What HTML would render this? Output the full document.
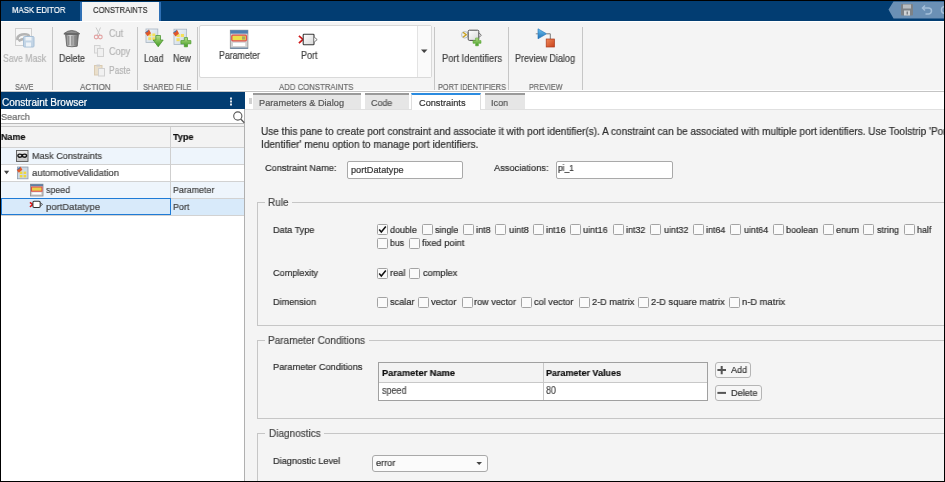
<!DOCTYPE html><html><head><meta charset="utf-8"><style>
*{margin:0;padding:0}
html,body{width:945px;height:482px;overflow:hidden;background:#fff}
body{position:relative;font-family:"Liberation Sans", sans-serif}
body>div,body>svg{position:absolute}
.t{white-space:nowrap;transform-origin:0 50%;will-change:transform;-webkit-text-stroke:0.2px currentColor}
</style></head><body>
<div style="left:0px;top:0px;width:945px;height:482px;background:#000"></div>
<div style="left:1px;top:1px;width:943px;height:480px;background:#fff"></div>
<div style="left:1px;top:1px;width:943px;height:20px;background:#023d72"></div>
<div style="left:80px;top:2px;width:81px;height:19px;background:#f4f4f4;border-left:2px solid #2f70b5;border-right:2px solid #2f70b5;box-sizing:border-box"></div>
<div class="t" style="transform:scaleX(0.8358);left:11.5px;top:6.43px;font-size:9.3px;line-height:9.3px;color:#fff;">MASK EDITOR</div>
<div class="t" style="transform:scaleX(0.8193);left:92.7px;top:6.43px;font-size:9.3px;line-height:9.3px;color:#333;">CONSTRAINTS</div>
<div style="left:1px;top:21px;width:943px;height:70px;background:#f4f4f4;border-top:1px solid #ffffff;box-sizing:border-box"></div>
<div style="left:1px;top:90px;width:943px;height:1px;background:#ffffff"></div>
<div style="left:1px;top:91px;width:943px;height:1px;background:#c4c4c4"></div>
<div style="left:52px;top:27px;width:1px;height:63px;background:#c6c6c6"></div>
<div style="left:137px;top:27px;width:1px;height:63px;background:#c6c6c6"></div>
<div style="left:197px;top:27px;width:1px;height:63px;background:#c6c6c6"></div>
<div style="left:434px;top:27px;width:1px;height:63px;background:#c6c6c6"></div>
<div style="left:508px;top:27px;width:1px;height:63px;background:#c6c6c6"></div>
<div style="left:582px;top:27px;width:1px;height:63px;background:#c6c6c6"></div>
<div class="t" style="transform:scaleX(0.7508);left:15px;top:82.26px;font-size:9.5px;line-height:9.5px;color:#6b6b6b;">SAVE</div>
<div class="t" style="transform:scaleX(0.8498);left:79.5px;top:82.26px;font-size:9.5px;line-height:9.5px;color:#6b6b6b;">ACTION</div>
<div class="t" style="transform:scaleX(0.7769);left:143px;top:82.26px;font-size:9.5px;line-height:9.5px;color:#6b6b6b;">SHARED FILE</div>
<div class="t" style="transform:scaleX(0.8183);left:278.7px;top:82.26px;font-size:9.5px;line-height:9.5px;color:#6b6b6b;">ADD CONSTRAINTS</div>
<div class="t" style="transform:scaleX(0.7744);left:437.5px;top:82.26px;font-size:9.5px;line-height:9.5px;color:#6b6b6b;">PORT IDENTIFIERS</div>
<div class="t" style="transform:scaleX(0.7669);left:528.6px;top:82.26px;font-size:9.5px;line-height:9.5px;color:#6b6b6b;">PREVIEW</div>
<div class="t" style="transform:scaleX(0.8692);left:3px;top:53.83px;font-size:10px;line-height:10px;color:#b4b4b4;">Save Mask</div>
<div class="t" style="transform:scaleX(0.8995);left:58.8px;top:53.83px;font-size:10px;line-height:10px;color:#424242;">Delete</div>
<div class="t" style="transform:scaleX(0.8764);left:143.5px;top:53.83px;font-size:10px;line-height:10px;color:#424242;">Load</div>
<div class="t" style="transform:scaleX(0.8943);left:172.7px;top:53.83px;font-size:10px;line-height:10px;color:#424242;">New</div>
<div class="t" style="transform:scaleX(0.9305);left:441.7px;top:53.83px;font-size:10px;line-height:10px;color:#424242;">Port Identifiers</div>
<div class="t" style="transform:scaleX(0.8995);left:515.4px;top:53.83px;font-size:10px;line-height:10px;color:#424242;">Preview Dialog</div>
<div class="t" style="transform:scaleX(0.9060);left:109.4px;top:28.84px;font-size:10px;line-height:10px;color:#b4b4b4;">Cut</div>
<div class="t" style="transform:scaleX(0.9118);left:109.4px;top:46.83px;font-size:10px;line-height:10px;color:#b4b4b4;">Copy</div>
<div class="t" style="transform:scaleX(0.8406);left:109.4px;top:65.83px;font-size:10px;line-height:10px;color:#b4b4b4;">Paste</div>
<div style="left:199px;top:25px;width:233px;height:53px;background:#fff;border:1px solid #d9d9d9;border-radius:2px;box-sizing:border-box"></div>
<div style="left:417px;top:26px;width:1px;height:51px;background:#e3e3e3"></div>
<div style="left:418px;top:26px;width:13px;height:51px;background:#fafafa"></div>
<div class="t" style="transform:scaleX(0.8782);left:218.9px;top:50.83px;font-size:10px;line-height:10px;color:#424242;">Parameter</div>
<div class="t" style="transform:scaleX(0.8995);left:300.5px;top:50.83px;font-size:10px;line-height:10px;color:#424242;">Port</div>
<div style="left:1px;top:92px;width:244px;height:17px;background:#023d72"></div>
<div class="t" style="transform:scaleX(0.9996);left:2px;top:97.83px;font-size:10px;line-height:10px;color:#fff;">Constraint Browser</div>
<div style="left:1px;top:109px;width:243px;height:14px;background:#fff"></div>
<div class="t" style="transform:scaleX(0.9341);left:1px;top:112.00px;font-size:9.8px;line-height:9.8px;color:#6a6a6a;">Search</div>
<div style="left:1px;top:123px;width:243px;height:1px;background:#b8b8b8"></div>
<div style="left:1px;top:124px;width:243px;height:2px;background:#f0f0f0"></div>
<div style="left:1px;top:126px;width:243px;height:1px;background:#c8c8c8"></div>
<div style="left:1px;top:127px;width:243px;height:20px;background:#f3f3f3"></div>
<div class="t" style="transform:scaleX(0.9143);left:1px;top:132.00px;font-size:9.8px;line-height:9.8px;color:#111;font-weight:bold;">Name</div>
<div class="t" style="transform:scaleX(0.9214);left:173.2px;top:132.00px;font-size:9.8px;line-height:9.8px;color:#111;font-weight:bold;">Type</div>
<div style="left:1px;top:147px;width:243px;height:17px;background:#eef5fc"></div>
<div style="left:1px;top:164px;width:243px;height:17px;background:#ffffff"></div>
<div style="left:1px;top:181px;width:243px;height:17px;background:#eef5fc"></div>
<div style="left:1px;top:198px;width:243px;height:17px;background:#d8eafa"></div>
<div style="left:1px;top:147px;width:243px;height:1px;background:#d2d2d2"></div>
<div style="left:1px;top:164px;width:243px;height:1px;background:#d2d2d2"></div>
<div style="left:1px;top:181px;width:243px;height:1px;background:#d2d2d2"></div>
<div style="left:1px;top:198px;width:243px;height:1px;background:#d2d2d2"></div>
<div style="left:1px;top:215px;width:243px;height:1px;background:#d2d2d2"></div>
<div style="left:170px;top:127px;width:1px;height:88px;background:#cfcfcf"></div>
<div style="left:1px;top:198px;width:170px;height:17px;border:1.6px solid #1f7bd6;box-sizing:border-box"></div>
<div style="left:244px;top:109px;width:1px;height:372px;background:#b0b0b0"></div>
<div class="t" style="transform:scaleX(0.9249);left:31.5px;top:151.00px;font-size:9.8px;line-height:9.8px;color:#424242;">Mask Constraints</div>
<div class="t" style="transform:scaleX(0.9642);left:31.5px;top:168.00px;font-size:9.8px;line-height:9.8px;color:#424242;">automotiveValidation</div>
<div class="t" style="transform:scaleX(0.9025);left:45.6px;top:185.00px;font-size:9.8px;line-height:9.8px;color:#424242;">speed</div>
<div class="t" style="transform:scaleX(0.9627);left:45.6px;top:202.00px;font-size:9.8px;line-height:9.8px;color:#424242;">portDatatype</div>
<div class="t" style="transform:scaleX(0.9027);left:173px;top:185.00px;font-size:9.8px;line-height:9.8px;color:#424242;">Parameter</div>
<div class="t" style="transform:scaleX(0.9127);left:173px;top:202.00px;font-size:9.8px;line-height:9.8px;color:#424242;">Port</div>
<div style="left:245px;top:92px;width:699px;height:17px;background:#fff"></div>
<div style="left:245px;top:109px;width:699px;height:372px;background:#f4f4f4"></div>
<div style="left:249px;top:98px;width:3px;height:6px;background:#d0d0d0"></div>
<div style="left:252.5px;top:93px;width:108.0px;height:16px;background:#e6e6e6;border-top:2px solid #9a9a9a;box-sizing:border-box"></div>
<div style="left:364.5px;top:93px;width:44.5px;height:16px;background:#e6e6e6;border-top:2px solid #9a9a9a;box-sizing:border-box"></div>
<div style="left:484.5px;top:93px;width:40.0px;height:16px;background:#e6e6e6;border-top:2px solid #9a9a9a;box-sizing:border-box"></div>
<div style="left:245px;top:109px;width:699px;height:1px;background:#e0e0e0"></div>
<div style="left:411px;top:93px;width:70px;height:17px;background:#fff;border-top:2px solid #2a8be0;border-left:1px solid #dedede;border-right:1px solid #dedede;box-sizing:border-box"></div>
<div class="t" style="transform:scaleX(1.0028);left:259px;top:98.51px;font-size:9.2px;line-height:9.2px;color:#555;">Parameters &amp; Dialog</div>
<div class="t" style="transform:scaleX(0.9696);left:370.6px;top:98.51px;font-size:9.2px;line-height:9.2px;color:#555;">Code</div>
<div class="t" style="transform:scaleX(1.0007);left:418.5px;top:98.51px;font-size:9.2px;line-height:9.2px;color:#333;">Constraints</div>
<div class="t" style="transform:scaleX(0.9784);left:491.3px;top:98.51px;font-size:9.2px;line-height:9.2px;color:#555;">Icon</div>
<div class="t" style="transform:scaleX(0.9581);left:261.2px;top:126.41px;font-size:10.5px;line-height:10.5px;color:#2e2e2e;">Use this pane to create port constraint and associate it with port identifier(s). A constraint can be associated with multiple port identifiers. Use Toolstrip 'Port</div>
<div class="t" style="transform:scaleX(0.9560);left:261.2px;top:139.41px;font-size:10.5px;line-height:10.5px;color:#2e2e2e;">Identifier' menu option to manage port identifiers.</div>
<div class="t" style="transform:scaleX(0.9484);left:264.9px;top:163.09px;font-size:9.7px;line-height:9.7px;color:#2e2e2e;">Constraint Name:</div>
<div style="left:347px;top:161px;width:116px;height:17.5px;background:#fff;border:1px solid #a9a9a9;border-radius:2px;box-sizing:border-box"></div>
<div class="t" style="transform:scaleX(0.9979);left:350.9px;top:165.51px;font-size:9.2px;line-height:9.2px;color:#333;">portDatatype</div>
<div class="t" style="transform:scaleX(0.9548);left:494px;top:163.09px;font-size:9.7px;line-height:9.7px;color:#2e2e2e;">Associations:</div>
<div style="left:556px;top:161px;width:117px;height:17.5px;background:#fff;border:1px solid #a9a9a9;border-radius:2px;box-sizing:border-box"></div>
<div class="t" style="transform:scaleX(0.9094);left:557.7px;top:163.51px;font-size:9.2px;line-height:9.2px;color:#333;">pi_1</div>
<div style="left:257px;top:202px;width:700px;height:124px;border:1px solid #c6c6c6;border-right:none;box-sizing:border-box"></div>
<div style="left:265px;top:196px;width:27px;height:12px;background:#f4f4f4"></div>
<div class="t" style="transform:scaleX(0.9533);left:268.4px;top:197.41px;font-size:10.5px;line-height:10.5px;color:#444;">Rule</div>
<div style="left:257px;top:340px;width:700px;height:79px;border:1px solid #c6c6c6;border-right:none;box-sizing:border-box"></div>
<div style="left:265px;top:334px;width:104px;height:12px;background:#f4f4f4"></div>
<div class="t" style="transform:scaleX(0.9551);left:268.3px;top:335.41px;font-size:10.5px;line-height:10.5px;color:#444;">Parameter Conditions</div>
<div style="left:257px;top:433px;width:700px;height:60px;border:1px solid #c6c6c6;border-right:none;box-sizing:border-box"></div>
<div style="left:265px;top:427px;width:59px;height:12px;background:#f4f4f4"></div>
<div class="t" style="transform:scaleX(0.9524);left:268.7px;top:428.41px;font-size:10.5px;line-height:10.5px;color:#444;">Diagnostics</div>
<div class="t" style="transform:scaleX(0.9412);left:273.2px;top:225.09px;font-size:9.7px;line-height:9.7px;color:#2e2e2e;">Data Type</div>
<div style="left:377px;top:224px;width:11px;height:11px;background:#fafafa;border:1px solid #a3a3a3;border-radius:1.5px;box-sizing:border-box"></div>
<svg style="left:377px;top:224px" width="11" height="11" viewBox="0 0 11 11"><path d="M2.2 5.6 L4.3 8 L8.8 2.6" stroke="#111" stroke-width="1.5" fill="none"/></svg>
<div class="t" style="transform:scaleX(0.9212);left:389.8px;top:225.09px;font-size:9.7px;line-height:9.7px;color:#2e2e2e;">double</div>
<div style="left:422px;top:224px;width:11px;height:11px;background:#fafafa;border:1px solid #a3a3a3;border-radius:1.5px;box-sizing:border-box"></div>
<div class="t" style="transform:scaleX(0.9205);left:434.7px;top:225.09px;font-size:9.7px;line-height:9.7px;color:#2e2e2e;">single</div>
<div style="left:463px;top:224px;width:11px;height:11px;background:#fafafa;border:1px solid #a3a3a3;border-radius:1.5px;box-sizing:border-box"></div>
<div class="t" style="transform:scaleX(0.9408);left:476.3px;top:225.09px;font-size:9.7px;line-height:9.7px;color:#2e2e2e;">int8</div>
<div style="left:495px;top:224px;width:11px;height:11px;background:#fafafa;border:1px solid #a3a3a3;border-radius:1.5px;box-sizing:border-box"></div>
<div class="t" style="transform:scaleX(0.9517);left:508.8px;top:225.09px;font-size:9.7px;line-height:9.7px;color:#2e2e2e;">uint8</div>
<div style="left:533px;top:224px;width:11px;height:11px;background:#fafafa;border:1px solid #a3a3a3;border-radius:1.5px;box-sizing:border-box"></div>
<div class="t" style="transform:scaleX(0.9374);left:546px;top:225.09px;font-size:9.7px;line-height:9.7px;color:#2e2e2e;">int16</div>
<div style="left:570px;top:224px;width:11px;height:11px;background:#fafafa;border:1px solid #a3a3a3;border-radius:1.5px;box-sizing:border-box"></div>
<div class="t" style="transform:scaleX(0.9354);left:583.3px;top:225.09px;font-size:9.7px;line-height:9.7px;color:#2e2e2e;">uint16</div>
<div style="left:613px;top:224px;width:11px;height:11px;background:#fafafa;border:1px solid #a3a3a3;border-radius:1.5px;box-sizing:border-box"></div>
<div class="t" style="transform:scaleX(0.9231);left:626.2px;top:225.09px;font-size:9.7px;line-height:9.7px;color:#2e2e2e;">int32</div>
<div style="left:650px;top:224px;width:11px;height:11px;background:#fafafa;border:1px solid #a3a3a3;border-radius:1.5px;box-sizing:border-box"></div>
<div class="t" style="transform:scaleX(0.9278);left:663.5px;top:225.09px;font-size:9.7px;line-height:9.7px;color:#2e2e2e;">uint32</div>
<div style="left:693px;top:224px;width:11px;height:11px;background:#fafafa;border:1px solid #a3a3a3;border-radius:1.5px;box-sizing:border-box"></div>
<div class="t" style="transform:scaleX(0.9231);left:705.9px;top:225.09px;font-size:9.7px;line-height:9.7px;color:#2e2e2e;">int64</div>
<div style="left:730px;top:224px;width:11px;height:11px;background:#fafafa;border:1px solid #a3a3a3;border-radius:1.5px;box-sizing:border-box"></div>
<div class="t" style="transform:scaleX(0.9164);left:743.5px;top:225.09px;font-size:9.7px;line-height:9.7px;color:#2e2e2e;">uint64</div>
<div style="left:773px;top:224px;width:11px;height:11px;background:#fafafa;border:1px solid #a3a3a3;border-radius:1.5px;box-sizing:border-box"></div>
<div class="t" style="transform:scaleX(0.9309);left:786.4px;top:225.09px;font-size:9.7px;line-height:9.7px;color:#2e2e2e;">boolean</div>
<div style="left:823px;top:224px;width:11px;height:11px;background:#fafafa;border:1px solid #a3a3a3;border-radius:1.5px;box-sizing:border-box"></div>
<div class="t" style="transform:scaleX(0.9449);left:836.1px;top:225.09px;font-size:9.7px;line-height:9.7px;color:#2e2e2e;">enum</div>
<div style="left:863px;top:224px;width:11px;height:11px;background:#fafafa;border:1px solid #a3a3a3;border-radius:1.5px;box-sizing:border-box"></div>
<div class="t" style="transform:scaleX(0.9281);left:876.8px;top:225.09px;font-size:9.7px;line-height:9.7px;color:#2e2e2e;">string</div>
<div style="left:904px;top:224px;width:11px;height:11px;background:#fafafa;border:1px solid #a3a3a3;border-radius:1.5px;box-sizing:border-box"></div>
<div class="t" style="transform:scaleX(0.9152);left:916.7px;top:225.09px;font-size:9.7px;line-height:9.7px;color:#2e2e2e;">half</div>
<div style="left:377px;top:238px;width:11px;height:11px;background:#fafafa;border:1px solid #a3a3a3;border-radius:1.5px;box-sizing:border-box"></div>
<div class="t" style="transform:scaleX(0.9024);left:389.8px;top:238.09px;font-size:9.7px;line-height:9.7px;color:#2e2e2e;">bus</div>
<div style="left:409px;top:238px;width:11px;height:11px;background:#fafafa;border:1px solid #a3a3a3;border-radius:1.5px;box-sizing:border-box"></div>
<div class="t" style="transform:scaleX(0.9599);left:421.6px;top:238.09px;font-size:9.7px;line-height:9.7px;color:#2e2e2e;">fixed point</div>
<div class="t" style="transform:scaleX(0.9411);left:273.1px;top:268.09px;font-size:9.7px;line-height:9.7px;color:#2e2e2e;">Complexity</div>
<div style="left:377px;top:268px;width:11px;height:11px;background:#fafafa;border:1px solid #a3a3a3;border-radius:1.5px;box-sizing:border-box"></div>
<svg style="left:377px;top:268px" width="11" height="11" viewBox="0 0 11 11"><path d="M2.2 5.6 L4.3 8 L8.8 2.6" stroke="#111" stroke-width="1.5" fill="none"/></svg>
<div class="t" style="transform:scaleX(0.9594);left:389.5px;top:268.09px;font-size:9.7px;line-height:9.7px;color:#2e2e2e;">real</div>
<div style="left:409px;top:268px;width:11px;height:11px;background:#fafafa;border:1px solid #a3a3a3;border-radius:1.5px;box-sizing:border-box"></div>
<div class="t" style="transform:scaleX(0.9507);left:422.5px;top:268.09px;font-size:9.7px;line-height:9.7px;color:#2e2e2e;">complex</div>
<div class="t" style="transform:scaleX(0.9396);left:273.1px;top:297.09px;font-size:9.7px;line-height:9.7px;color:#2e2e2e;">Dimension</div>
<div style="left:377px;top:297px;width:11px;height:11px;background:#fafafa;border:1px solid #a3a3a3;border-radius:1.5px;box-sizing:border-box"></div>
<div class="t" style="transform:scaleX(0.9480);left:389.5px;top:297.09px;font-size:9.7px;line-height:9.7px;color:#2e2e2e;">scalar</div>
<div style="left:418px;top:297px;width:11px;height:11px;background:#fafafa;border:1px solid #a3a3a3;border-radius:1.5px;box-sizing:border-box"></div>
<div class="t" style="transform:scaleX(0.9625);left:431.4px;top:297.09px;font-size:9.7px;line-height:9.7px;color:#2e2e2e;">vector</div>
<div style="left:462px;top:297px;width:11px;height:11px;background:#fafafa;border:1px solid #a3a3a3;border-radius:1.5px;box-sizing:border-box"></div>
<div class="t" style="transform:scaleX(0.9399);left:474.2px;top:297.09px;font-size:9.7px;line-height:9.7px;color:#2e2e2e;">row vector</div>
<div style="left:521px;top:297px;width:11px;height:11px;background:#fafafa;border:1px solid #a3a3a3;border-radius:1.5px;box-sizing:border-box"></div>
<div class="t" style="transform:scaleX(0.9501);left:534.3px;top:297.09px;font-size:9.7px;line-height:9.7px;color:#2e2e2e;">col vector</div>
<div style="left:579px;top:297px;width:11px;height:11px;background:#fafafa;border:1px solid #a3a3a3;border-radius:1.5px;box-sizing:border-box"></div>
<div class="t" style="transform:scaleX(0.9488);left:591.9px;top:297.09px;font-size:9.7px;line-height:9.7px;color:#2e2e2e;">2-D matrix</div>
<div style="left:638px;top:297px;width:11px;height:11px;background:#fafafa;border:1px solid #a3a3a3;border-radius:1.5px;box-sizing:border-box"></div>
<div class="t" style="transform:scaleX(0.9558);left:650.9px;top:297.09px;font-size:9.7px;line-height:9.7px;color:#2e2e2e;">2-D square matrix</div>
<div style="left:729px;top:297px;width:11px;height:11px;background:#fafafa;border:1px solid #a3a3a3;border-radius:1.5px;box-sizing:border-box"></div>
<div class="t" style="transform:scaleX(0.9667);left:742.1px;top:297.09px;font-size:9.7px;line-height:9.7px;color:#2e2e2e;">n-D matrix</div>
<div class="t" style="transform:scaleX(0.9551);left:273.2px;top:362.09px;font-size:9.7px;line-height:9.7px;color:#2e2e2e;">Parameter Conditions</div>
<div style="left:378px;top:361.5px;width:330px;height:39px;background:#fff;border:1px solid #a0a0a0;box-sizing:border-box"></div>
<div style="left:379px;top:362.5px;width:328px;height:20px;background:#f3f3f3"></div>
<div style="left:379px;top:382px;width:328px;height:1px;background:#c8c8c8"></div>
<div style="left:543px;top:362.5px;width:1px;height:37px;background:#c8c8c8"></div>
<div class="t" style="transform:scaleX(0.9733);left:381.5px;top:368.26px;font-size:9.5px;line-height:9.5px;color:#111;font-weight:bold;">Parameter Name</div>
<div class="t" style="transform:scaleX(0.9466);left:546px;top:368.26px;font-size:9.5px;line-height:9.5px;color:#111;font-weight:bold;">Parameter Values</div>
<div class="t" style="transform:scaleX(0.8991);left:381.5px;top:385.84px;font-size:10px;line-height:10px;color:#4a4a4a;">speed</div>
<div class="t" style="transform:scaleX(0.8989);left:546px;top:385.84px;font-size:10px;line-height:10px;color:#4a4a4a;">80</div>
<div style="left:715px;top:362px;width:36px;height:16px;background:#f6f6f6;border:1px solid #b5b5b5;border-radius:3px;box-sizing:border-box"></div>
<div style="left:715px;top:384.5px;width:46.5px;height:16.5px;background:#f6f6f6;border:1px solid #b5b5b5;border-radius:3px;box-sizing:border-box"></div>
<div class="t" style="transform:scaleX(0.9588);left:730.8px;top:365.34px;font-size:9.4px;line-height:9.4px;color:#333;">Add</div>
<div class="t" style="transform:scaleX(0.9738);left:730.8px;top:388.34px;font-size:9.4px;line-height:9.4px;color:#333;">Delete</div>
<div class="t" style="transform:scaleX(0.9452);left:273.2px;top:456.09px;font-size:9.7px;line-height:9.7px;color:#2e2e2e;">Diagnostic Level</div>
<div style="left:372px;top:455.3px;width:116px;height:16.5px;background:#fbfbfb;border:1px solid #a9a9a9;border-radius:3px;box-sizing:border-box"></div>
<div class="t" style="transform:scaleX(0.9620);left:375.7px;top:458.26px;font-size:9.5px;line-height:9.5px;color:#333;">error</div>
<svg style="left:0;top:0" width="945" height="482" viewBox="0 0 945 482">
<defs>
 <linearGradient id="gGray" x1="0" y1="0" x2="0" y2="1"><stop offset="0" stop-color="#ececec"/><stop offset="1" stop-color="#c4c4c4"/></linearGradient>
 <linearGradient id="gTrash" x1="0" y1="0" x2="1" y2="0"><stop offset="0" stop-color="#7a7a7a"/><stop offset="0.35" stop-color="#d8d8d8"/><stop offset="0.7" stop-color="#9a9a9a"/><stop offset="1" stop-color="#6a6a6a"/></linearGradient>
 <linearGradient id="gDoc" x1="0" y1="0" x2="1" y2="1"><stop offset="0" stop-color="#f4f7fa"/><stop offset="1" stop-color="#c9d6e3"/></linearGradient>
 <linearGradient id="gGreen" x1="0" y1="0" x2="0" y2="1"><stop offset="0" stop-color="#b8e08a"/><stop offset="1" stop-color="#3f9a22"/></linearGradient>
 <linearGradient id="gBlueTri" x1="0" y1="0" x2="0" y2="1"><stop offset="0" stop-color="#6cc3f0"/><stop offset="1" stop-color="#1f6fb5"/></linearGradient>
 <linearGradient id="gRed" x1="0" y1="0" x2="1" y2="1"><stop offset="0" stop-color="#f08a5a"/><stop offset="1" stop-color="#c8401a"/></linearGradient>
 <linearGradient id="gBox" x1="0" y1="0" x2="1" y2="1"><stop offset="0" stop-color="#ffffff"/><stop offset="1" stop-color="#d8d8d8"/></linearGradient>
</defs>
<!-- quick access -->
<polygon points="888.5,9.5 893.5,1.5 944,1.5 944,18.5 893.5,18.5" fill="#6b90b5"/>
<rect x="901" y="4" width="12" height="11.5" rx="1" fill="#7d8287"/>
<rect x="903" y="4.5" width="8" height="4" fill="#b9bec3"/>
<rect x="904" y="10.5" width="6" height="5" fill="#d0d3d6"/><rect x="906.5" y="11.5" width="1.5" height="3" fill="#7d8287"/>
<path d="M923 8 H928.5 a3 3 0 0 1 0 6 H925.5" stroke="#a4bfd9" stroke-width="1.5" fill="none"/>
<path d="M925 5.5 L922.5 8 L925 10.5" stroke="#a4bfd9" stroke-width="1.5" fill="none"/>
<path d="M944.5 6.5 a3.5 3.5 0 0 0 -3 3.5 a3.5 3.5 0 0 0 3 3.5" stroke="#a4bfd9" stroke-width="1.5" fill="none"/>

<!-- save mask (disabled) -->
<rect x="15.5" y="28.5" width="16" height="17" fill="#f6f6f6" stroke="#d0d0d0"/>
<path d="M17.5 40 C16.5 35.5, 22 33.5, 27 34.5 C30 35, 29.5 38, 26 38.5 C22.5 39, 20.5 39.5, 18.5 41" stroke="#b4b4b4" stroke-width="2.6" fill="none"/>
<rect x="23.5" y="36.5" width="10.5" height="10.5" rx="1" fill="#c3d5e6" stroke="#a7bfd6"/>
<rect x="25.5" y="37" width="6" height="3.5" fill="#eef3f8"/>
<rect x="26" y="42.5" width="5" height="4" fill="#eef3f8"/>

<!-- delete trash -->
<path d="M64 33.5 Q71.6 27.5 79.5 33.5 Z" fill="#8d8d8d" stroke="#5a5a5a" stroke-width="0.8"/>
<rect x="63.8" y="33" width="15.7" height="1.6" fill="#6a6a6a"/>
<path d="M65.6 34.5 L66.8 46.2 Q71.9 47.3 77.2 46.2 L78.4 34.5 Z" fill="url(#gTrash)" stroke="#5c5c5c" stroke-width="0.8"/>
<path d="M68.8 36 V45 M71.9 36 V45.5 M75 36 V45" stroke="#7c7c7c" stroke-width="0.9"/>

<!-- cut / copy / paste (disabled) -->
<path d="M96 27.5 L100 35.5 M100.5 27.5 L97 35.5" stroke="#c4c4c4" stroke-width="0.9"/>
<circle cx="96.2" cy="37" r="1.9" fill="none" stroke="#e2a3a3" stroke-width="1.1"/>
<circle cx="100.3" cy="37" r="1.9" fill="none" stroke="#e2a3a3" stroke-width="1.1"/>
<rect x="94.5" y="45.5" width="5.5" height="7.5" fill="#efefef" stroke="#d2d2d2"/>
<rect x="97.5" y="48.5" width="6" height="8" fill="#f0f0f0" stroke="#d0d0d0"/>
<rect x="94.5" y="65.5" width="7.5" height="9.5" fill="#eadfcb" stroke="#dacbb2"/>
<rect x="96.5" y="64.5" width="3.5" height="2" fill="#cfcfcf"/>
<rect x="98.5" y="68.5" width="6" height="7.5" fill="#f1f1f1" stroke="#d0d0d0"/>

<!-- load -->
<rect x="146" y="29" width="11.8" height="13.5" fill="url(#gDoc)" stroke="#a9b6c3" stroke-width="0.8"/>
<rect x="148.3" y="33.5" width="3" height="2.8" fill="#f5e05a"/><rect x="152.3" y="33.5" width="3" height="2.8" fill="#f5e05a"/>
<rect x="148.3" y="37.3" width="3" height="2.8" fill="#f5e05a"/><rect x="152.3" y="37.3" width="3" height="2.8" fill="#f5e05a"/>
<path d="M145 32.8 L149 29.6 L151 33.2 L147.5 36.2 Z" fill="#e0582a"/>
<path d="M144.8 32.9 L148.9 29.4 L147.8 31.8 Z" fill="#2f78c0"/>
<path d="M155.8 35.5 H160.5 V40 H163.2 L158.2 46.8 L153.2 40 H155.8 Z" fill="url(#gGreen)" stroke="#3e8d22" stroke-width="0.7"/>

<!-- new -->
<rect x="174" y="29.2" width="12.6" height="15.3" fill="url(#gDoc)" stroke="#a9b6c3" stroke-width="0.8"/>
<rect x="176.5" y="34" width="3.2" height="3" fill="#f5e05a"/><rect x="180.8" y="34" width="3.2" height="3" fill="#f5e05a"/>
<rect x="176.5" y="38.2" width="3.2" height="3" fill="#f5e05a"/>
<path d="M173 33 L177 29.8 L179 33.4 L175.5 36.4 Z" fill="#e0582a"/>
<path d="M172.8 33.1 L176.9 29.6 L175.8 32 Z" fill="#2f78c0"/>
<path d="M184.3 37.6 H187.5 V40.6 H190.9 V43.8 H187.5 V46.8 H184.3 V43.8 H180.9 V40.6 H184.3 Z" fill="url(#gGreen)" stroke="#4a9a2a" stroke-width="0.7"/>

<!-- parameter (gallery) -->
<rect x="230.3" y="30.2" width="17.6" height="18.3" fill="#d2d2d2" stroke="#8e8e8e" stroke-width="0.8"/>
<rect x="230.3" y="30.2" width="17.6" height="3.4" fill="#4f7fb0"/>
<rect x="231.8" y="35.2" width="14.6" height="5.6" rx="1" fill="#ece04a" stroke="#e05050" stroke-width="1.3"/>
<rect x="242" y="36.4" width="3" height="3.2" fill="#a8a860"/>
<rect x="233" y="42.8" width="12.2" height="3.2" fill="#ffffff"/>
<rect x="230.3" y="47.6" width="17.6" height="1" fill="#5a7fa5"/>

<!-- port (gallery) -->
<path d="M298.9 35.8 L303 39.4 L298.9 43.1" stroke="#d01818" stroke-width="1.7" fill="none"/>
<rect x="303.2" y="34.2" width="10.8" height="10.6" rx="0.8" fill="url(#gBox)" stroke="#3a3a3a" stroke-width="1.1"/>
<path d="M314.3 37.2 L317.2 39.6 L314.3 42" stroke="#555" stroke-width="0.8" fill="#fff"/>

<!-- port identifiers -->
<circle cx="464.8" cy="34.8" r="3.3" fill="#f2f2ea" stroke="#9aa8c0" stroke-width="0.7"/>
<path d="M463 32.3 L466.2 34.8 L463 37.3" stroke="#c8a020" stroke-width="1.4" fill="none"/>
<rect x="468.2" y="30.2" width="10.6" height="10.2" rx="1.2" fill="url(#gBox)" stroke="#4a4a4a" stroke-width="1"/>
<path d="M479.2 33 L481.3 35.2 L479.2 37.4" stroke="#555" stroke-width="0.8" fill="none"/>
<path d="M475.6 38 H478.4 V40.6 H481 V43.3 H478.4 V45.8 H475.6 V43.3 H473 V40.6 H475.6 Z" fill="url(#gGreen)" stroke="#5aa636" stroke-width="0.6"/>

<!-- preview dialog -->
<path d="M535.8 33.8 H538" stroke="#8a8a8a" stroke-width="1"/>
<polygon points="538,28.8 546.6,33.8 538,38.8" fill="url(#gBlueTri)" stroke="#1f6fb5" stroke-width="0.6"/>
<path d="M546.5 33.8 H550.3 V39" stroke="#7a7a7a" stroke-width="1" fill="none"/>
<rect x="546.2" y="39" width="8.2" height="8" fill="url(#gRed)" stroke="#a8381a" stroke-width="0.7"/>

<!-- left panel: dots, search -->
<rect x="230" y="97.5" width="2" height="2" fill="#dfe7ef"/><rect x="230" y="100.5" width="2" height="2" fill="#dfe7ef"/><rect x="230" y="103.5" width="2" height="2" fill="#dfe7ef"/>
<circle cx="237.8" cy="116" r="4.1" fill="none" stroke="#5a5a5a" stroke-width="1.1"/>
<path d="M240.7 119 L244.3 122.8" stroke="#5a5a5a" stroke-width="1.3"/>

<!-- tree icons -->
<rect x="16.5" y="150.5" width="11.5" height="11" fill="url(#gGray)" stroke="#5a5a5a" stroke-width="0.9"/>
<path d="M17.2 155.6 C17.2 153.2, 19.8 152.9, 22.2 154 C24.6 152.9, 27.3 153.2, 27.3 155.6 C27.3 158.2, 24.8 158.6, 22.2 157.3 C19.6 158.6, 17.2 158.2, 17.2 155.6 Z" fill="#151515"/>
<ellipse cx="19.9" cy="155.6" rx="1.4" ry="0.9" fill="#e0e0e0"/><ellipse cx="24.5" cy="155.6" rx="1.4" ry="0.9" fill="#e0e0e0"/>

<polygon points="4,170.8 9.2,170.8 6.6,174.2" fill="#444"/>
<rect x="17.5" y="167" width="10.5" height="11.8" fill="#cdd8e4" stroke="#8d9cab" stroke-width="0.8"/>
<rect x="19.8" y="171.6" width="2.6" height="2.4" fill="#f0d83a"/><rect x="23.6" y="171.6" width="2.6" height="2.4" fill="#f0d83a"/>
<rect x="19.8" y="175" width="2.6" height="2.4" fill="#f0d83a"/><rect x="23.6" y="175" width="2.6" height="2.4" fill="#f0d83a"/>
<path d="M16.8 170 L20.6 166.8 L22.4 169.8 L18.8 172.8 Z" fill="#e0582a"/>
<path d="M16.6 170.1 L20.4 166.6 L19.4 169 Z" fill="#2f78c0"/>
<rect x="30.5" y="184.2" width="12.5" height="11.8" fill="#cfcfcf" stroke="#8a8a8a" stroke-width="0.8"/>
<rect x="30.5" y="184.2" width="12.5" height="2" fill="#5f7fa2"/>
<rect x="31.5" y="187" width="10.5" height="4.2" fill="#e8d048" stroke="#e04848" stroke-width="1"/>
<rect x="32.2" y="192.4" width="9" height="2" fill="#ffffff"/>

<path d="M29.9 202.4 L32.8 204.6 L29.9 206.8" stroke="#e01010" stroke-width="1.5" fill="none"/>
<rect x="32.9" y="201.3" width="7.3" height="6.2" rx="1.2" fill="#fff" stroke="#333" stroke-width="1.1"/>
<path d="M40.4 202.8 L42.6 204.4 L40.4 206" stroke="#444" stroke-width="0.8" fill="none"/>

<!-- gallery dropdown arrow -->
<polygon points="421,49.5 427.5,49.5 424.2,53" fill="#444"/>
<!-- add / delete glyphs -->
<path d="M721.7 366 V374.2 M717.4 370.1 H726" stroke="#555" stroke-width="2"/>
<path d="M717.4 392.9 H726" stroke="#555" stroke-width="2"/>
<!-- dropdown arrow -->
<polygon points="476.4,462 482,462 479.2,465" fill="#444"/>
</svg>
<div style="left:0px;top:0px;width:945px;height:1px;background:#000"></div>
<div style="left:0px;top:481px;width:945px;height:1px;background:#000"></div>
<div style="left:0px;top:0px;width:1px;height:482px;background:#000"></div>
<div style="left:944px;top:0px;width:1px;height:482px;background:#000"></div>
</body></html>
